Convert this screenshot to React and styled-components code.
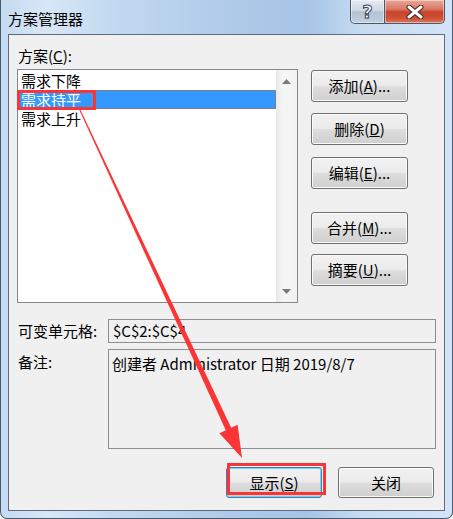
import React from "react";
import styled, { createGlobalStyle } from "styled-components";

const GlobalStyle = createGlobalStyle`
    html, body {
        margin: 0;
        padding: 0;
        background: #fff;
    }
    body {
        font-family: "Noto Sans CJK SC", "Noto Sans", sans-serif;
        color: #000;
    }
`;

const Window = styled.div`
    position: relative;
    width: 453px;
    height: 519px;
    box-sizing: border-box;
    display: flex;
    flex-direction: column;
    padding: 0 7px 7px;
    border: 1px solid #4a5a6e;
    border-top: none;
    border-radius: 0 0 7px 7px;
    background: linear-gradient(
        90deg,
        #c4daf1 0%,
        #d8e7f6 10%,
        #c2d9f0 25%,
        #b3cdea 45%,
        #a6c4e6 68%,
        #c6dcf2 80%,
        #d2e4f6 100%
    );
    overflow: hidden;
`;

const TitleBar = styled.div`
    height: 34px;
    display: flex;
    align-items: flex-start;
`;

const Title = styled.div`
    margin-top: 9px;
    font-size: 15px;
    line-height: 20px;
`;

const Captions = styled.div`
    margin-left: auto;
    display: flex;
`;

const CaptionButton = styled.div`
    width: ${(p) => p.$w}px;
    height: 24px;
    box-sizing: border-box;
    border: 1px solid #4d5868;
    border-top: none;
    border-left: ${(p) => (p.$close ? "none" : "1px solid #4d5868")};
    border-radius: ${(p) => (p.$close ? "0 0 5px 0" : "0 0 0 5px")};
    display: flex;
    align-items: center;
    justify-content: center;
    background: ${(p) =>
        p.$close
            ? "linear-gradient(#e9a899 0%, #da7764 40%, #c8442b 52%, #cf5238 80%, #dc7a61 100%)"
            : "linear-gradient(#e4ebf3 0%, #cdd8e4 45%, #b3c3d5 52%, #c2d0df 100%)"};
    box-shadow: inset 0 0 0 1px rgba(255, 255, 255, 0.45);
`;

const HelpGlyph = styled.span`
    font-family: "DejaVu Sans", sans-serif;
    font-weight: bold;
    font-size: 18px;
    line-height: 20px;
    color: #fff;
    -webkit-text-stroke: 1px #3d4857;
`;

const Client = styled.div`
    flex: 1;
    background: #f0f0f0;
    border: 1px solid #5f6b7a;
    padding: 11px 7px 0 8px;
    display: flex;
    flex-direction: column;
`;

const Label = styled.div`
    font-size: 15px;
    line-height: 20px;
    padding-left: 1px;
`;

const MainRow = styled.div`
    margin-top: 3px;
    display: flex;
    align-items: flex-start;
    gap: 13px;
`;

const ListBox = styled.div`
    width: 281px;
    height: 234px;
    box-sizing: border-box;
    border: 1px solid #828790;
    background: #fff;
    display: flex;
`;

const Items = styled.div`
    flex: 1;
    padding-top: 1px;
`;

const Item = styled.div`
    height: 19px;
    box-sizing: border-box;
    line-height: 18px;
    font-size: 15px;
    padding-left: 2px;
    background: ${(p) => (p.$selected ? "#3399ff" : "transparent")};
    color: ${(p) => (p.$selected ? "#fff" : "#000")};
    border: 1px dotted ${(p) => (p.$selected ? "#cc6600" : "transparent")};
`;

const ScrollBar = styled.div`
    width: 21px;
    display: flex;
    flex-direction: column;
    justify-content: space-between;
    background: linear-gradient(90deg, #e9e9e9 0%, #f6f6f6 35%, #f1f1f1 100%);
`;

const ScrollArrow = styled.div`
    height: 22px;
    display: flex;
    align-items: center;
    justify-content: center;
`;

const ButtonColumn = styled.div`
    display: flex;
    flex-direction: column;
    padding-top: 1px;
`;

const Button = styled.div`
    width: ${(p) => p.$w || 97}px;
    height: ${(p) => p.$h || 32}px;
    margin-top: ${(p) => p.$mt || 0}px;
    box-sizing: border-box;
    border: 1px solid ${(p) => (p.$default ? "#3c7fb1" : "#707070")};
    border-radius: 3px;
    background: linear-gradient(#f2f2f2 0%, #ebebeb 48%, #dddddd 52%, #cfcfcf 100%);
    box-shadow: inset 0 0 0 1px ${(p) => (p.$default ? "#6fd6f7" : "#fbfbfb")};
    display: flex;
    align-items: center;
    justify-content: center;
    font-size: 15px;
    line-height: 20px;
`;

const FieldRow = styled.div`
    margin-top: ${(p) => p.$mt}px;
    display: flex;
    align-items: ${(p) => (p.$top ? "flex-start" : "center")};
`;

const FieldLabel = styled.div`
    width: 90px;
    padding-left: 1px;
    padding-top: ${(p) => (p.$top ? 3 : 0)}px;
    font-size: 15px;
    line-height: 20px;
`;

const Field = styled.div`
    width: 328px;
    height: ${(p) => p.$h}px;
    box-sizing: border-box;
    border: 1px solid #8e8e8e;
    background: #f0f0f0;
    padding: ${(p) => (p.$multi ? "4px 3px" : "1px 4px")};
    font-size: 15px;
    line-height: 20px;
    white-space: nowrap;
`;

const Footer = styled.div`
    margin-top: 18px;
    padding-right: 3px;
    display: flex;
    justify-content: flex-end;
    gap: 16px;
`;

const Mark = styled.div`
    position: absolute;
    left: ${(p) => p.$x}px;
    top: ${(p) => p.$y}px;
    width: ${(p) => p.$w}px;
    height: ${(p) => p.$h}px;
    box-sizing: border-box;
    border: 3px solid #fb3535;
    pointer-events: none;
`;

const Overlay = styled.svg`
    position: absolute;
    left: -1px;
    top: 0;
    pointer-events: none;
`;

const Triangle = ({ up }) => (
    <svg width="9" height="5" viewBox="0 0 9 5">
        <polygon
            points={up ? "4.5,0 9,5 0,5" : "0,0 9,0 4.5,5"}
            fill="#7a7a7a"
        />
    </svg>
);

const items = ["需求下降", "需求持平", "需求上升"];

const sideButtons = [
    { label: "添加", key: "A", dots: true, mt: 0 },
    { label: "删除", key: "D", dots: false, mt: 11 },
    { label: "编辑", key: "E", dots: true, mt: 12 },
    { label: "合并", key: "M", dots: true, mt: 23 },
    { label: "摘要", key: "U", dots: true, mt: 10 },
];

export default function App() {
    return (
        <>
            <GlobalStyle />
            <Window>
                <TitleBar>
                    <Title>方案管理器</Title>
                    <Captions>
                        <CaptionButton $w={35}>
                            <HelpGlyph>?</HelpGlyph>
                        </CaptionButton>
                        <CaptionButton $w={60} $close>
                            <svg width="20" height="14" viewBox="0 0 20 14">
                                <path
                                    d="M4 2 L16 12 M16 2 L4 12"
                                    stroke="#3b2420"
                                    strokeWidth="5"
                                    strokeLinecap="round"
                                />
                                <path
                                    d="M4 2 L16 12 M16 2 L4 12"
                                    stroke="#fff"
                                    strokeWidth="3"
                                    strokeLinecap="round"
                                />
                            </svg>
                        </CaptionButton>
                    </Captions>
                </TitleBar>
                <Client>
                    <Label>
                        方案(<u>C</u>):
                    </Label>
                    <MainRow>
                        <ListBox>
                            <Items>
                                {items.map((t, i) => (
                                    <Item key={t} $selected={i === 1}>
                                        {t}
                                    </Item>
                                ))}
                            </Items>
                            <ScrollBar>
                                <ScrollArrow>
                                    <Triangle up />
                                </ScrollArrow>
                                <ScrollArrow>
                                    <Triangle />
                                </ScrollArrow>
                            </ScrollBar>
                        </ListBox>
                        <ButtonColumn>
                            {sideButtons.map((b) => (
                                <Button key={b.key} $mt={b.mt}>
                                    {b.label}(<u>{b.key}</u>){b.dots ? "..." : ""}
                                </Button>
                            ))}
                        </ButtonColumn>
                    </MainRow>
                    <FieldRow $mt={16}>
                        <FieldLabel>可变单元格:</FieldLabel>
                        <Field $h={24}>$C$2:$C$4</Field>
                    </FieldRow>
                    <FieldRow $mt={6} $top>
                        <FieldLabel $top>备注:</FieldLabel>
                        <Field $h={100} $multi>
                            创建者 Administrator 日期 2019/8/7
                        </Field>
                    </FieldRow>
                    <Footer>
                        <Button $w={96} $h={31} $default>
                            显示(<u>S</u>)
                        </Button>
                        <Button $w={96} $h={31}>
                            关闭
                        </Button>
                    </Footer>
                </Client>
                <Mark $x={16} $y={90} $w={79} $h={20} />
                <Mark $x={226} $y={463} $w={99} $h={32} />
                <Overlay width="453" height="519" viewBox="0 0 453 519">
                    <polygon
                        points="78.5,108.2 79.5,107.8 231.2,427.7 237.6,424.8 242,458 219.4,433.2 225.8,430.3"
                        fill="#fb3535"
                    />
                </Overlay>
            </Window>
        </>
    );
}
